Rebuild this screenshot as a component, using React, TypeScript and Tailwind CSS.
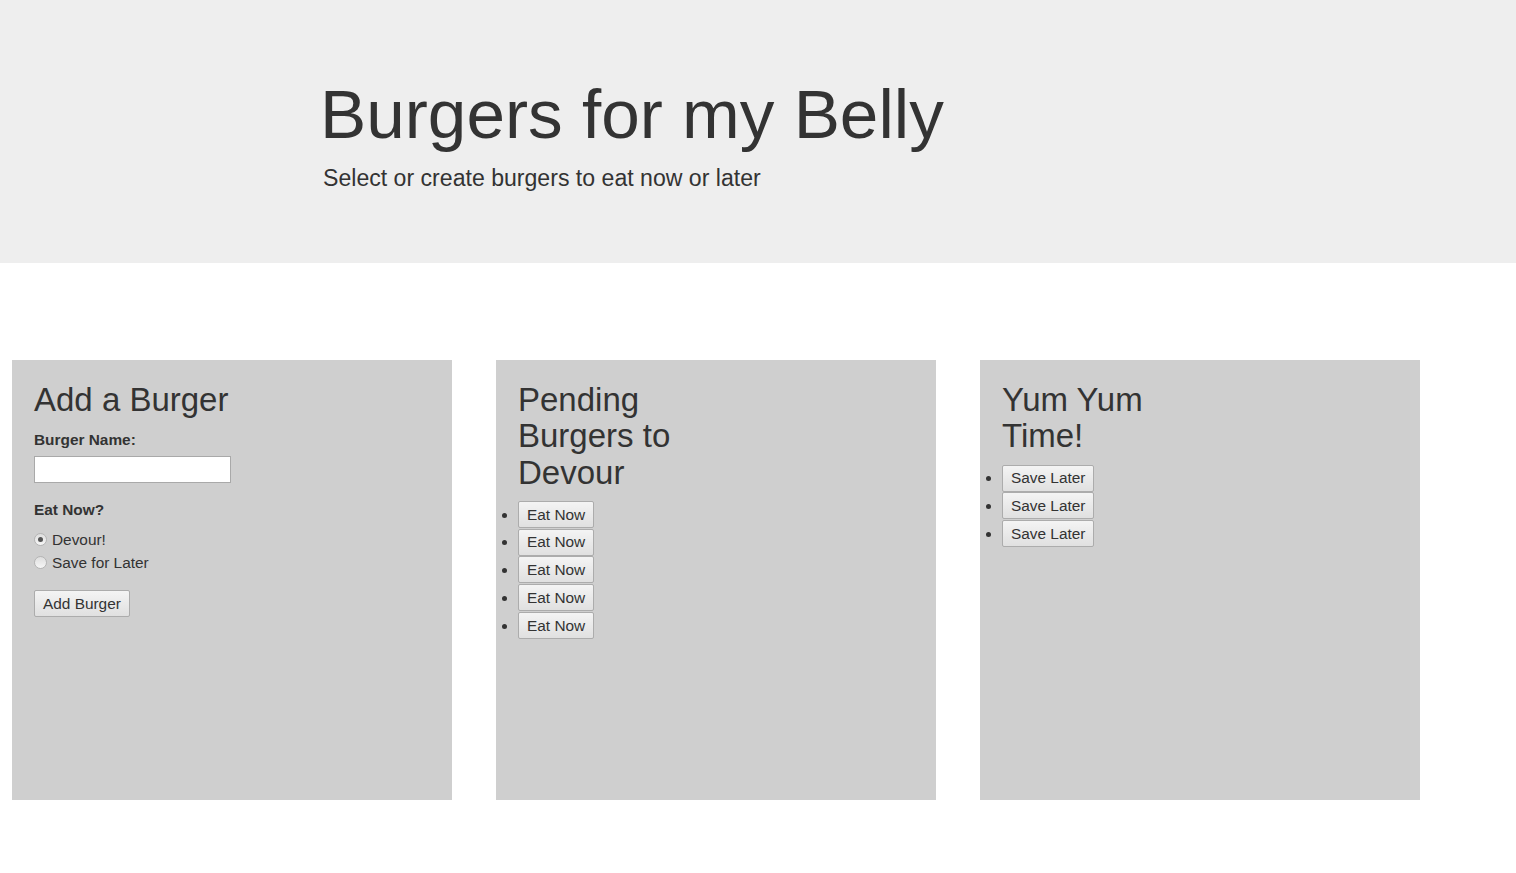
import React from "react";

function Btn({ children }: { children: React.ReactNode }) {
  return (
    <button
      type="button"
      className="inline-flex h-[27px] items-center rounded-[2px] border border-[#acacac] bg-gradient-to-b from-[#f4f4f4] to-[#e0e0e0] px-[8px] text-[15.4px] leading-none text-[#333]"
    >
      {children}
    </button>
  );
}

function Radio({ checked }: { checked?: boolean }) {
  return (
    <span className="mr-[5px] flex h-[13px] w-[13px] items-center justify-center rounded-full border border-[#b4b4b4] bg-gradient-to-b from-[#dedede] to-[#f6f6f6]">
      {checked && <span className="h-[5px] w-[5px] rounded-full bg-[#555]" />}
    </span>
  );
}

function Card({ children }: { children: React.ReactNode }) {
  return (
    <section className="h-[440px] w-[440px] shrink-0 bg-[#cfcfcf] px-[22px] pt-[22px]">{children}</section>
  );
}

function H2({ children }: { children: React.ReactNode }) {
  return <h2 className="w-[212px] text-[33px] leading-[36.3px] font-normal">{children}</h2>;
}

export default function App() {
  return (
    <div className="min-h-screen bg-white font-['Liberation_Sans',Arial,sans-serif] text-[#333]">
      <header className="h-[263px] bg-[#eeeeee] pl-[320px] pt-[76px]">
        <h1 className="text-[69.3px] leading-[76.2px] font-normal">Burgers for my Belly</h1>
        <p className="ml-[3px] mt-[10px] text-[23.1px] leading-[33px]">Select or create burgers to eat now or later</p>
      </header>

      <main className="flex gap-[44px] pl-[12px] pt-[97px]">
        <Card>
          <H2>Add a Burger</H2>
          <form className="text-[15.4px] leading-[22px]" onSubmit={(e) => e.preventDefault()}>
            <label className="mt-[11px] block font-bold">Burger Name:</label>
            <input
              type="text"
              className="mt-[5px] block h-[27px] w-[197px] border border-[#a9a9a9] bg-white px-1 outline-none"
            />
            <div className="mt-[16px] font-bold">Eat Now?</div>
            <div className="mt-[7px] flex h-[23px] items-center">
              <Radio checked />
              <span>Devour!</span>
            </div>
            <div className="flex h-[23px] items-center">
              <Radio />
              <span>Save for Later</span>
            </div>
            <div className="mt-[16px]">
              <Btn>Add Burger</Btn>
            </div>
          </form>
        </Card>

        <Card>
          <H2>Pending Burgers to Devour</H2>
          <ul className="mt-[10px] list-disc pl-0 text-[15.4px]">
            {[0, 1, 2, 3, 4].map((i) => (
              <li key={i} className="h-[27.75px] list-outside">
                <Btn>Eat Now</Btn>
              </li>
            ))}
          </ul>
        </Card>

        <Card>
          <H2>Yum Yum Time!</H2>
          <ul className="mt-[10px] list-disc pl-0 text-[15.4px]">
            {[0, 1, 2].map((i) => (
              <li key={i} className="h-[27.75px] list-outside">
                <Btn>Save Later</Btn>
              </li>
            ))}
          </ul>
        </Card>
      </main>
    </div>
  );
}
